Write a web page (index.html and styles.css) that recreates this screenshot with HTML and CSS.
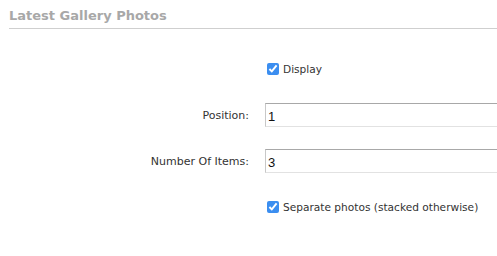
FILE: index.html
```html
<!DOCTYPE html>
<html>
<head>
<meta charset="utf-8">
<link rel="stylesheet" href="styles.css">
</head>
<body>
<div class="panel">
  <h2 class="title">Latest Gallery Photos</h2>
  <div class="form">
    <div class="row">
      <div class="label"></div>
      <label class="check"><input type="checkbox" checked><span>Display</span></label>
    </div>
    <div class="row">
      <div class="label">Position:</div>
      <input class="text" type="text" value="1">
    </div>
    <div class="row">
      <div class="label">Number Of Items:</div>
      <input class="text" type="text" value="3">
    </div>
    <div class="row">
      <div class="label"></div>
      <label class="check"><input type="checkbox" checked><span>Separate photos (stacked otherwise)</span></label>
    </div>
  </div>
</div>
</body>
</html>
```
FILE: styles.css
```css
html, body {
  margin: 0;
  padding: 0;
  background: #fff;
  overflow: hidden;
}
body {
  font-family: "DejaVu Sans", Verdana, sans-serif;
  font-size: 11px;
  color: #333;
}
.panel {
  padding-left: 9px;
}
.title {
  margin: 0;
  padding-top: 7px;
  height: 21px;
  font-size: 13px;
  font-weight: bold;
  color: #a8a8a8;
  border-bottom: 1px solid #cfcfcf;
  line-height: 18px;
}
.form {
  padding-top: 17px;
}
.row {
  display: flex;
  align-items: center;
  height: 46px;
}
.label {
  width: 240px;
  flex: none;
  text-align: right;
  padding-right: 16px;
}
.check {
  display: flex;
  align-items: center;
  margin-left: 2px;
  font-size: 10.6px;
}
.check input {
  margin: 0 4px 0 0;
  width: 12px;
  height: 12px;
  accent-color: #3b8ef0;
}
.text {
  flex: none;
  width: 232px;
  height: 24px;
  box-sizing: border-box;
  border: 1px solid #c8c8c8;
  border-top-color: #a8a8a8;
  border-bottom-color: #e2e2e2;
  border-right: none;
  padding: 2px 2px 0;
  font-family: "Liberation Sans", Arial, sans-serif;
  font-size: 13px;
  color: #111;
  outline: none;
}
```
